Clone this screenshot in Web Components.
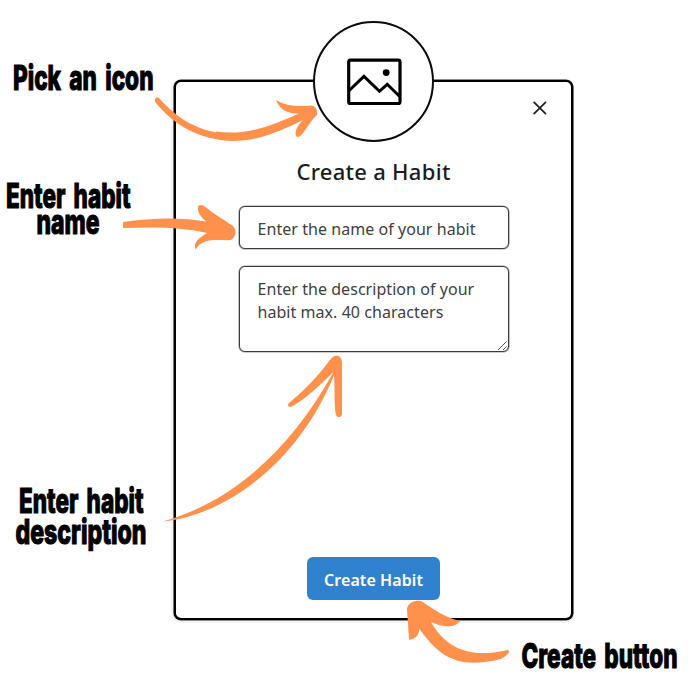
<!DOCTYPE html>
<html lang="en">
<head>
<meta charset="utf-8">
<title>Create a Habit</title>
<style>
html,body{margin:0;width:700px;height:700px;overflow:hidden;background:#fff}
</style>
</head>
<body>
<habit-guide></habit-guide>
<script>
const define = (name, html) => customElements.define(name, class extends HTMLElement {
  constructor() {
    super();
    const t = document.createElement('template');
    t.innerHTML = html;
    this.attachShadow({mode: 'open'}).append(t.content.cloneNode(true));
  }
});

define('icon-picker', `<style>
:host{display:grid;place-items:center;box-sizing:border-box;width:121px;height:121px;border:2.4px solid #0b0b0b;border-radius:50%;background:#fff}
svg{display:block}
</style>
<svg width="56" height="48" viewBox="0 0 56 48" fill="none" stroke="#000">
<rect x="2.700" y="2.200" width="51.300" height="43.300" rx="1.800" stroke-width="3.200"/>
<path d="M3.200 32.500 17.900 18.300 33.500 33.300 41.200 26.300 53.700 38.500" stroke-width="3"/>
<circle cx="40.200" cy="14.600" r="3.400" fill="#000" stroke="none"/>
</svg>`);

define('close-button', `<style>:host{display:block;width:14px;height:14px}svg{display:block}</style>
<svg width="14" height="14" viewBox="0 0 14 14"><path d="M.6.8 13 13.2M13 .8.6 13.2" stroke="#222" stroke-width="1.800"/></svg>`);

define('text-field', `<style>
:host{display:flex;box-sizing:border-box;position:relative;width:270px;height:43px;padding:10.500px 18px 0 18px;border:1px solid #3c3c3c;border-radius:6px;box-shadow:0 0 0 .6px #999;background:#fff;color:#404040;font:16px/23px "Noto Sans",sans-serif;letter-spacing:.05px;white-space:nowrap}
:host([multiline]){height:86px;padding-top:11px}
svg{display:none;position:absolute;right:0;bottom:0}
:host([multiline]) svg{display:block}
</style><span><slot></slot></span>
<svg width="11" height="11" viewBox="0 0 11 11"><path d="M1 10 9.500 1.500M6 10 9.500 6.500" stroke="#555" stroke-width="1"/></svg>`);

define('primary-button', `<style>
:host{display:flex;align-items:center;justify-content:center;width:133px;height:43px;padding-top:3px;box-sizing:border-box;border-radius:6px;background:#3182ce;color:#fff;font:600 16px/22px "Noto Sans",sans-serif;white-space:nowrap;letter-spacing:.08px}
</style><slot></slot>`);

define('habit-dialog', `<style>
:host{display:flex;flex-direction:column;align-items:center;box-sizing:border-box;width:399px;height:540px;border:2px solid #000;border-radius:7px;background:#fff;box-shadow:0 0 0 .6px #222,-1px 1px 1px 2px #f3f3f3}
icon-picker{margin-top:-61px;flex:none}
.top{display:flex;width:100%;justify-content:flex-end;height:0}
close-button{margin:-41px 24px 0 0;flex:none}
h1{margin:13px 0 0;font:500 22px/32px "Noto Sans",sans-serif;letter-spacing:.29px;color:#1c1c1c;white-space:nowrap}
.fields{display:grid;gap:17px;margin-top:19px}
primary-button{margin-top:auto;margin-bottom:18px}
</style>
<icon-picker></icon-picker>
<div class="top"><close-button></close-button></div>
<h1>Create a Habit</h1>
<div class="fields">
<text-field>Enter the name of your habit</text-field>
<text-field multiline>Enter the description of your<br>habit max. 40 characters</text-field>
</div>
<primary-button>Create Habit</primary-button>`);

// Each caption: left edge, baseline, width on the canvas, text.
const squeeze = .58;
const captions = [
  [13, 90, 140.5, 'Pick an icon'],
  [6, 208, 124.5, 'Enter habit'],
  [36.5, 234, 63, 'name'],
  [19, 513, 124.5, 'Enter habit'],
  [15.5, 544, 131, 'description'],
  [521.5, 668, 156, 'Create button']
].map(([x, y, w, s]) => `<text transform="translate(${x} ${y}) scale(${squeeze} 1)" textLength="${w / squeeze}" lengthAdjust="spacingAndGlyphs">${s}</text>`).join('');

define('guide-notes', `<style>
:host{display:block;position:absolute;inset:0;pointer-events:none}
svg{display:block}
text{font:800 34px Inter,sans-serif;word-spacing:5px;fill:#000;stroke:#000;stroke-width:.9px;vector-effect:non-scaling-stroke}
</style>
<svg width="700" height="700" viewBox="0 0 700 700">
<g fill="#ff914d">
<path d="M155 101.500C154 99 157 96 159 98C168 108 178 117 190 123.500C199 128 208 131 216 132.500L216 131.500C246 136 271 126 299 113.500C286 114 279 108 276 100C285 106 298 107 311 105.500C316 106 318 111 317 115C311 120 307 128 303 133C299 138 296 138 295.500 134C296 128 299 124 303 120C277 133 256 141 233 141C198 140 171 123 155 101.500Z"/>
<path d="M123 222C151 218 180 217 206 221.500C201 217 198 213 198 209C197 205 201 204 204 206C214 214 223 219 233 226C237 230 236 237 231 240C223 241 202 236 195.500 249.800C193 242 199 238 207 233C181 227 153 227 123 228Z"/>
<path d="M163 521.500C225 504 286 458 333.500 372C319 386 303 401 291 407C288 407 287 405 289 403C306 389 319 375 329 361C334 354 341 354 342 362L342 414C341 419 336 418 335.500 413C334 401 335 389 334 375C300 460 228 515 163 521.500Z"/>
<path d="M409 640L407 609C408 602 416 600 421 601C433 609 446 618 460 621C454 629 442 627 431 622C449 654 478 657 508 650C511 651 507 656 501 659C457 670 439 656 419.500 629C418 637 416 638 409 640Z"/>
</g>
${captions}
</svg>`);

define('habit-guide', `<style>
:host{display:flex;justify-content:flex-start;position:relative;width:700px;height:700px;box-sizing:border-box;padding:80px 0 0 174px;background:#fff}
</style><habit-dialog></habit-dialog><guide-notes></guide-notes>`);
</script>
</body>
</html>
